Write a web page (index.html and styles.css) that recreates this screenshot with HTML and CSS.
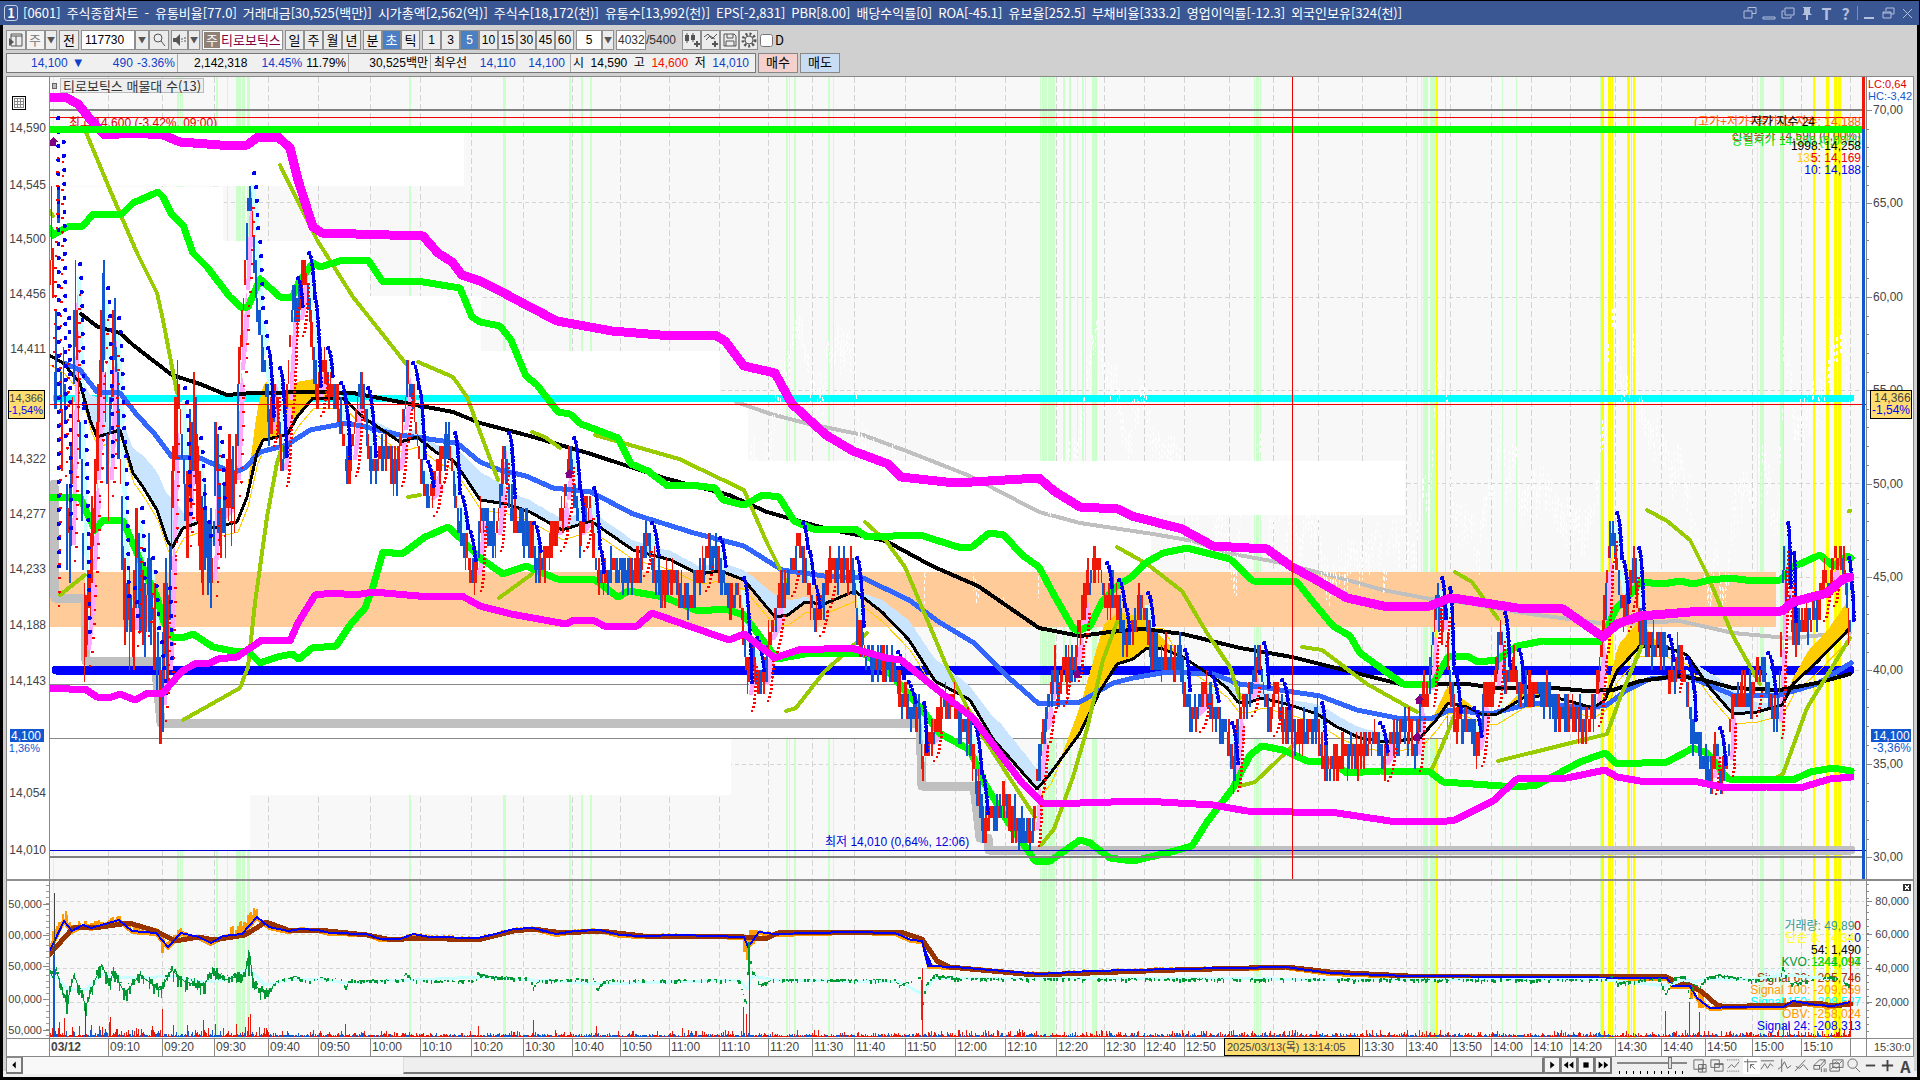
FILE: index.html
```html
<!DOCTYPE html>
<html lang="ko">
<head>
<meta charset="utf-8">
<title>[0601] 주식종합차트</title>
<link rel="stylesheet" href="styles.css">
</head>
<body>
<main class="window">
  <header class="titlebar">
    <span class="title-index">1</span>
    <h1 class="title-text"><span>[0601]</span><span>주식종합차트</span><span>-</span><span>유통비율[77.0]</span><span>거래대금[30,525(백만)]</span><span>시가총액[2,562(억)]</span><span>주식수[18,172(천)]</span><span>유통수[13,992(천)]</span><span>EPS[-2,831]</span><span>PBR[8.00]</span><span>배당수익률[0]</span><span>ROA[-45.1]</span><span>유보율[252.5]</span><span>부채비율[333.2]</span><span>영업이익률[-12.3]</span><span>외국인보유[324(천)]</span></h1>
    <div class="title-actions">
      <button aria-label="연결"><svg viewBox="0 0 14 14"><path d="M5 5V1.500h8v6H9M1 5h8v7H1z"/></svg></button>
      <button aria-label="접기"><svg viewBox="0 0 14 14"><path d="M1 11h12v2H1z"/></svg></button>
      <button aria-label="복제"><svg viewBox="0 0 14 14"><path d="M4 2h9v7H4zM3 5H1v7h9v-2"/></svg></button>
      <button aria-label="고정"><svg viewBox="0 0 14 14"><path class="solid" d="M3 1h8v1H10v5l2 2H8v5H6V9H2l2-2V2H3z"/></svg></button>
      <button class="glyph">T</button>
      <button class="glyph">?</button>
      <i class="title-divider"></i>
      <button aria-label="최소화"><svg viewBox="0 0 14 14"><path class="solid" d="M2 11h10v2H2z"/></svg></button>
      <button aria-label="이전 크기"><svg viewBox="0 0 14 14"><path d="M5 5V2h8v6h-3M2 6h8v6H2zM2 7h8"/></svg></button>
      <button aria-label="닫기"><svg viewBox="0 0 14 14"><path d="M3 3l9 9M12 3l-9 9"/></svg></button>
    </div>
  </header>

  <div class="body">
    <div class="tools">
      <div class="group">
        <button class="btn" aria-label="목록 열기"><svg class="icon" viewBox="0 0 16 16"><path d="M3 2h11v12H3zM3 4h11M8 4v10"/><path class="fill" d="M1 6l5 4-5 4z"/></svg></button>
        <select class="box w-kind" aria-label="종류"><option>주</option></select>
        <button class="btn arrow slim" aria-label="종류 선택">▼</button>
      </div>
      <button class="btn">전</button>
      <div class="group">
        <input class="box w-code" value="117730" aria-label="종목코드">
        <button class="btn arrow" aria-label="최근 종목">▼</button>
        <button class="btn" aria-label="검색"><svg class="icon" viewBox="0 0 16 16"><circle cx="7" cy="6" r="4"/><path d="M10 9l4 5"/></svg></button>
      </div>
      <div class="group">
        <button class="btn speaker" aria-label="소리"><svg class="icon" viewBox="0 0 16 16"><path class="fill" d="M1 6h3l4-4v12L4 10H1z"/><path d="M10 6v4M13 5v6" stroke-dasharray="2 1"/></svg></button>
        <button class="btn arrow slim" aria-label="소리 설정">▼</button>
      </div>
      <div class="box stock"><span class="stock-tag">주</span><span>티로보틱스</span></div>
      <div class="group periods">
        <button class="btn">일</button><button class="btn">주</button><button class="btn">월</button><button class="btn">년</button>
      </div>
      <div class="group periods">
        <button class="btn">분</button><button class="btn on">초</button><button class="btn">틱</button>
      </div>
      <div class="group periods numbers">
        <button class="btn">1</button><button class="btn">3</button><button class="btn on">5</button><button class="btn">10</button><button class="btn">15</button><button class="btn">30</button><button class="btn">45</button><button class="btn">60</button>
      </div>
      <div class="group">
        <input class="box w-unit" value="5" aria-label="주기"><button class="btn arrow slim" aria-label="주기 선택">▼</button>
      </div>
      <label class="count"><input class="box w-count" value="4032" aria-label="봉 개수">/5400</label>
      <div class="group periods">
        <button class="btn" aria-label="봉 추가"><svg class="icon" viewBox="0 0 16 16"><path class="fill" d="M1 3h4v6H1zM7 3h4v5H7zM10 11h6v2h-6zM12 9h2v6h-2z"/><path d="M3 1v10M9 1v9"/></svg></button>
        <button class="btn" aria-label="지표 추가"><svg class="icon" viewBox="0 0 16 16"><path d="M1 5l4-3 4 5 5-5M3 8l4-4 5 3"/><path class="fill" d="M9 11h6v2H9zM11 9h2v6h-2z"/></svg></button>
        <button class="btn" aria-label="저장"><svg class="icon" viewBox="0 0 16 16"><path d="M2 2h10l2 2v10H2zM5 2v4h6V2M4 14V9h8v5"/></svg></button>
        <button class="btn" aria-label="설정"><svg class="icon" viewBox="0 0 16 16"><circle class="gear" cx="8" cy="8" r="6"/><circle cx="8" cy="8" r="4"/></svg></button>
      </div>
      <label class="check"><input type="checkbox">D</label>
    </div>

    <div class="quote">
      <div class="quote-cells">
        <div class="cell c1 blue"><span>14,100</span><span class="tri">▼</span><span class="gap-l">490</span><span>-3.36%</span></div>
        <div class="cell c2"><span>2,142,318</span><span class="push blue">14.45%</span><span>11.79%</span></div>
        <div class="cell c3"><span class="push">30,525백만</span></div>
        <div class="cell c4"><span>최우선</span><span class="blue">14,110</span><span class="blue">14,100</span></div>
        <div class="cell c5"><span>시</span><span>14,590</span><span>고</span><span class="red">14,600</span><span>저</span><span class="blue">14,010</span></div>
      </div>
      <button class="trade buy">매수</button>
      <button class="trade sell">매도</button>
    </div>

    <section class="chart">
      <svg id="left-main" viewBox="7 77 42 803" preserveAspectRatio="none"></svg>
      <div class="plot">
        <svg id="main" viewBox="49 77 1817 803" preserveAspectRatio="none"></svg>
        <span class="legend"><i class="legend-dot"></i><b class="legend-name">티로보틱스 매물대 수(13)</b></span>
      </div>
      <svg id="right-main" viewBox="1866 77 48 803" preserveAspectRatio="none"></svg>
      <svg id="left-sub" viewBox="7 880 42 158" preserveAspectRatio="none"></svg>
      <svg id="sub" viewBox="49 880 1817 158" preserveAspectRatio="none"></svg>
      <svg id="right-sub" viewBox="1866 880 48 158" preserveAspectRatio="none"></svg>
      <svg id="left-time" viewBox="7 1038 42 19" preserveAspectRatio="none"></svg>
      <svg id="time" viewBox="49 1038 1817 19" preserveAspectRatio="none"></svg>
      <svg id="right-time" viewBox="1866 1038 48 19" preserveAspectRatio="none"></svg>
    </section>

    <footer class="controls">
      <button class="raised" aria-label="왼쪽"><svg viewBox="0 0 16 16"><path class="ink" d="M10 4v8L6 8z"/></svg></button>
      <div class="track"><div class="thumb"></div></div>
      <button class="raised" aria-label="재생"><svg viewBox="0 0 16 16"><path class="ink" d="M6 4v8l5-4z"/></svg></button>
      <button class="raised" aria-label="뒤로"><svg viewBox="0 0 16 16"><path class="ink" d="M7 4v8L2 8zM13 4v8L8 8z"/></svg></button>
      <button class="raised" aria-label="정지"><svg viewBox="0 0 16 16"><path class="ink" d="M5 5h6v6H5z"/></svg></button>
      <button class="raised" aria-label="앞으로"><svg viewBox="0 0 16 16"><path class="ink" d="M3 4v8l5-4zM9 4v8l5-4z"/></svg></button>
      <div class="speed"><input type="range" value="77" aria-label="재생 속도"></div>
      <div class="chart-tools">
        <button aria-label="창 추가"><svg viewBox="0 0 16 16"><path d="M2 2h10v10H2zM7 7h8v8H7zM7 11h8M11 7v8"/></svg></button>
        <button aria-label="창 겹치기"><svg viewBox="0 0 16 16"><path d="M2 2h9v8H2zM6 6h9v8H6zM6 7h9"/></svg></button>
        <button aria-label="영역"><svg viewBox="0 0 16 16"><path d="M1 2h14M1 14h14" stroke-dasharray="1 1"/><path d="M2 11l4-4 3 3 5-6"/></svg></button>
        <button class="pressed" aria-label="십자선"><svg viewBox="0 0 16 16"><path d="M1 4h14M5 1v14M8 7l5 5M8 11V7h4"/></svg></button>
        <button aria-label="수평선"><svg viewBox="0 0 16 16"><path d="M1 3h14M1 12l4-6 3 5 3-5 3 3"/></svg></button>
        <button aria-label="수직선"><svg viewBox="0 0 16 16"><path d="M5 1v14M1 12l4-3 3-5 3 7 4-3"/></svg></button>
        <button aria-label="추세선"><svg viewBox="0 0 16 16"><path d="M1 14L12 2M2 9l4 2 4-4 5 6"/></svg></button>
        <button aria-label="전체 지우기"><svg viewBox="0 0 16 16"><path d="M2 8l6-6h6l-5 6zM2 8v4h6V8M14 2v4l-5 5M10 15v-4M13 15v-4M15 15v-4"/></svg></button>
        <button aria-label="비교"><svg viewBox="0 0 16 16"><path d="M4 2h11v8H4zM1 6h10v8H1zM5 6l3-2 3 2 3-3M2 12l3-3 3 2 2-2"/></svg></button>
        <button aria-label="확대경"><svg viewBox="0 0 16 16"><circle cx="7" cy="6" r="5"/><path d="M10 10l5 5"/></svg></button>
        <button aria-label="축소"><svg viewBox="0 0 16 16"><path class="bold" d="M3 8h10"/></svg></button>
        <button aria-label="확대"><svg viewBox="0 0 16 16"><path class="bold" d="M2 8h12M8 2v12"/></svg></button>
        <button class="letter">A</button>
      </div>
    </footer>
  </div>
</main>
<script src="chart.js"></script>
</body>
</html>
```
FILE: styles.css
```css
* { box-sizing: border-box; }

body {
  margin: 0;
  background: #000;
  color: #000;
  font: 13px/16px "Noto Sans CJK KR", sans-serif;
}

button, input, select { font: inherit; color: inherit; margin: 0; padding: 0; }

.window { display: flex; flex-direction: column; height: 100vh; padding: 1px 0 3px; }

/* title bar */
.titlebar { display: flex; align-items: center; flex: none; height: 24px; padding: 0 4px; background: #3a5794; color: #fff; margin-right: 1px; }
.title-index { width: 14px; height: 16px; border: 1px solid #c8d3ea; border-radius: 3px; text-align: center; line-height: 14px; font-weight: bold; }
.title-text { display: flex; gap: 6px; flex: 1; min-width: 0; margin: 0 0 0 5px; font-size: 13px; line-height: 20px; font-weight: normal; white-space: nowrap; }
.title-actions { display: flex; align-items: center; gap: 4px; }
.title-actions button { width: 15px; height: 16px; border: 0; background: none; color: #b4c0dc; }
.title-actions svg { display: block; width: 14px; height: 14px; fill: none; stroke: #b4c0dc; }
.title-actions .solid { fill: #b4c0dc; stroke: none; }
.title-actions .glyph { font-size: 16px; font-weight: bold; }
.title-divider { width: 1px; height: 14px; background: #7f8fb5; }

.body { display: flex; flex-direction: column; flex: 1; min-height: 0; margin: 0 3px; padding: 5px 3px 3px; background: #d0d0d0; box-shadow: inset 0 -6px #efefef; }

/* toolbar */
.tools { display: flex; flex: none; gap: 2px; height: 20px; align-items: stretch; }
.tools input, .numbers, .count, .quote { font: 12px/16px "Liberation Sans", "Noto Sans CJK KR", sans-serif; }
.group { display: flex; }
.btn { width: 20px; border: 1px solid #8f8f8f; background: #ececec; display: grid; place-items: center; }
.periods .btn { width: 19px; }
.btn.on { background: #4a7fc4; color: #fff; }
.icon { width: 16px; height: 16px; fill: none; stroke: #555; }
.icon .fill { fill: #555; stroke: none; }
.icon .gear { stroke-width: 3; stroke-dasharray: 2 2; }
.box { border: 1px solid #8f8f8f; background: #fff; height: 20px; border-radius: 0; }
.btn.arrow { width: 14px; font-size: 8px; color: #555; }
.btn.slim { width: 12px; }
.btn.speaker { width: 17px; }
.w-kind { width: 19px; padding-left: 2px; background: #f4f4f4; color: #777; appearance: none; }
.w-code { width: 54px; padding-left: 3px; }
.w-unit { width: 26px; text-align: center; }
.w-count { width: 30px; padding-left: 1px; }
.stock { display: flex; width: 81px; color: #800040; white-space: nowrap; line-height: 18px; }
.stock-tag { flex: none; width: 16px; margin: 1px; background: #8f8078; color: #fff; line-height: 16px; text-align: center; }
.count { display: flex; width: 64px; color: #333; }
.tools .count { line-height: 20px; }
.check { display: flex; gap: 2px; align-items: center; }
.check input { width: 13px; height: 13px; }

/* quote line */
.quote { display: flex; flex: none; gap: 2px; height: 20px; margin: 3px 0; }
.quote-cells { display: flex; border: 1px solid #777; background: #f0f0f0; line-height: 18px; }
.cell { display: flex; white-space: nowrap; border-right: 1px solid #aaa; padding: 0 2px; }
.cell:last-child { border-right: 0; }
.c1 { width: 171px; padding-left: 24px; justify-content: space-between; }
.c1 .gap-l { margin-left: 24px; }
.tri { font-size: 13px; }
.c2 { width: 171px; padding-left: 16px; gap: 4px; }
.c3 { width: 82px; }
.c4 { width: 140px; padding: 0 5px 0 3px; justify-content: space-between; }
.c5 { width: 184px; padding-right: 6px; justify-content: space-between; }
.push { margin-left: auto; }
.blue { color: #1040c8; }
.red { color: #f01000; }
.trade { width: 40px; border: 1px solid #888; font-size: 13px; }
.buy { background: #f5d0cc; }
.sell { background: #c8dcf4; }

/* chart */
.chart { display: grid; flex: 1; min-height: 0; grid-template-columns: 42px minmax(0, 1fr) 48px; grid-template-rows: minmax(0, 803fr) minmax(0, 158fr) 19px; background: #fff; border: 1px solid #888; border-bottom: 0; border-right: 0; }
.chart svg { display: block; width: 100%; height: 100%; shape-rendering: crispEdges; }
.chart text { font: 12px "Liberation Sans", "Noto Sans CJK KR", sans-serif; fill: #444; dominant-baseline: central; }
.chart .tag { font-size: 11px; }
.chart .strong { font-weight: bold; }
.plot { position: relative; min-height: 0; }
.legend { position: absolute; left: 3px; top: 1px; display: flex; align-items: center; gap: 3px; }
.legend-dot { width: 5px; height: 6px; border: 1px solid #666; background: #bbb; }
.legend-name { padding: 0 2px; border: 1px solid #bbb; background: #eee; color: #333; font-weight: normal; line-height: 13px; }

/* bottom controls */
.controls { display: flex; flex: none; height: 17px; background: #efefef; }
.raised { width: 17px; border: 1px solid #888; border-right: 2px solid #777; border-bottom: 2px solid #777; background: #f4f4f4; }
.raised svg { display: block; width: 14px; height: 14px; }
.ink { fill: #000; }
.track { flex: 1; display: flex; justify-content: flex-end; background: #f8f8f8; }
.thumb { width: 75%; background: #efefef; border: 1px solid #ddd; border-right: 2px solid #777; border-bottom: 2px solid #777; }
.speed { width: 80px; padding: 0 5px; background: repeating-linear-gradient(90deg, #000 0 1px, transparent 1px 7px) 7px 14px / 68px 3px no-repeat; }
.speed input { display: block; appearance: none; width: 70px; height: 12px; background: linear-gradient(#888, #888) 0 5px / 100% 2px no-repeat; }
.speed input::-webkit-slider-thumb { appearance: none; width: 4px; height: 12px; background: #ddd; border: 1px solid #777; }
.chart-tools { display: flex; width: 222px; justify-content: space-between; }
.chart-tools button { width: 17px; border: 0; background: none; color: #444; }
.chart-tools svg { display: block; width: 15px; height: 15px; fill: none; stroke: #666; }
.chart-tools .pressed { background: #fff; }
.chart-tools .bold { stroke: #444; stroke-width: 2; }
.chart-tools .letter { font-weight: bold; font-size: 16px; }
```
FILE: chart.js
```js
const NS = 'http://www.w3.org/2000/svg';
const $ = id => document.getElementById(id);

function add(host, tag, attrs, text) {
  const el = document.createElementNS(NS, tag);
  for (const k in attrs) el.setAttribute(k, attrs[k]);
  if (text !== undefined) el.textContent = text;
  host.appendChild(el);
  return el;
}
const pts = s => s.trim().split(/\s+/).map(p => p.split(',').map(Number));
const line = (host, s, color, w, extra) => add(host, 'polyline', Object.assign({ points: s, fill: 'none', stroke: color, 'stroke-width': w, 'stroke-linejoin': 'round', 'stroke-linecap': 'round' }, extra));
const rect = (host, x, y, w, h, fill, extra) => add(host, 'rect', Object.assign({ x, y, width: w, height: h, fill }, extra));
const path = (host, d, color, w, extra) => add(host, 'path', Object.assign({ d, fill: 'none', stroke: color, 'stroke-width': w }, extra));
const label = (host, x, y, t, color, anchor, cls) => add(host, 'text', { x, y, class: cls || '', 'text-anchor': anchor || 'start', style: color ? 'fill:' + color : '' }, t);

let seed = 7;
const rnd = () => (seed = (seed * 16807) % 2147483647) / 2147483647;

function at(p, x) {
  for (let i = 1; i < p.length; i++) {
    if (x <= p[i][0]) {
      const [a, b] = [p[i - 1], p[i]];
      return a[1] + (b[1] - a[1]) * (x - a[0]) / ((b[0] - a[0]) || 1);
    }
  }
  return p[p.length - 1][1];
}

const main = $('main'), sub = $('sub'), time = $('time');

const times = [[108,'09:10'],[162,'09:20'],[214,'09:30'],[268,'09:40'],[318,'09:50'],[370,'10:00'],[420,'10:10'],[471,'10:20'],[523,'10:30'],[572,'10:40'],[620,'10:50'],[669,'11:00'],[719,'11:10'],[768,'11:20'],[812,'11:30'],[854,'11:40'],[905,'11:50'],[955,'12:00'],[1005,'12:10'],[1056,'12:20'],[1104,'12:30'],[1144,'12:40'],[1184,'12:50'],[1229,''],[1273,''],[1318,''],[1362,'13:30'],[1406,'13:40'],[1450,'13:50'],[1491,'14:00'],[1531,'14:10'],[1570,'14:20'],[1615,'14:30'],[1661,'14:40'],[1705,'14:50'],[1752,'15:00'],[1801,'15:10'],[1850,'']];
const greens = [[53,1],[177,2],[180,1],[182,1],[216,2],[227,1],[236,5],[242,3],[247,3],[409,2],[503,3],[569,2],[581,2],[590,2],[786,2],[789,1],[794,2],[828,2],[833,1],[1040,1],[1042,5],[1048,7],[1063,2],[1069,2],[1077,1],[1082,2],[1085,1],[1092,5],[1254,1],[1256,3],[1260,1],[1417,1],[1421,1],[1423,5],[1430,6],[1502,1],[1516,1],[1600,1],[1757,1],[1760,4],[1780,3]];
const yellows = [[1436,2],[1445,1],[1601,3],[1608,3],[1612,1],[1627,3],[1631,1],[1633,2],[1783,1],[1813,2],[1826,3],[1834,3],[1838,3]];

function backdrop(svg, y, h, rows) {
  rect(svg, 49, y, 1817, h, '#f8f8f8');
  for (const [x] of times) path(svg, `M${x + .5} ${y}v${h}`, '#d4d4d4', 1, { 'stroke-dasharray': '6 3' });
  for (const r of rows) path(svg, `M49 ${r + .5}H1864`, '#d4d4d4', 1, { 'stroke-dasharray': '4 3' });
  for (const [x, w] of greens) rect(svg, x, y, w, h, '#ccffcc');
  for (const [x, w] of yellows) rect(svg, x, y, w, h, '#ffff00');
}

/* ---------- price panel ---------- */
backdrop(main, 77, 803, [202, 297, 390, 483, 577, 670, 764]);
[[133,53,464],[187,54,223],[241,55,370],[296,55,481],[351,54,720],[405,56,748],[461,54,1405],[515,57,1151],[627,57,896],[684,55,1447],[739,56,731],[795,55,250]]
  .forEach(([y, h, x]) => rect(main, 49, y, x - 49, h, '#fff'));
rect(main, 49, 572, 1727, 55, '#ffcc99');
path(main, 'M49 684.500H1447V738.500H49', '#888', 1);

const price = pts('49,350 52,240 54,130 55,590 57,300 59,140 62,460 65,330 67,540 71,545 76,276 80,420 86,650 92,570 96,480 101,360 104,300 109,480 115,330 120,440 125,610 131,600 134,630 138,520 141,600 145,620 149,570 155,640 160,680 162,705 166,600 168,670 172,540 175,420 181,400 187,530 191,440 197,450 201,520 208,560 213,580 216,440 221,520 230,490 236,480 240,370 245,290 250,185 254,240 259,320 264,360 270,430 276,380 283,470 288,400 294,290 299,320 305,265 311,310 317,400 324,360 329,390 337,395 344,430 346,470 352,460 359,390 364,400 372,470 382,450 390,460 398,470 403,430 409,375 415,400 421,470 430,500 438,470 444,445 451,445 456,505 464,540 472,575 477,575 482,510 490,525 497,535 502,480 505,445 511,510 520,525 530,535 537,565 545,555 557,535 566,500 570,450 576,500 580,535 590,500 596,560 600,585 612,570 620,570 633,578 640,560 648,535 655,570 664,588 675,575 683,598 692,598 702,575 709,550 716,550 722,580 730,600 740,590 746,650 748,695 753,650 760,682 764,685 770,640 780,600 788,580 795,555 799,535 804,560 810,595 816,620 824,595 831,570 836,568 853,570 860,640 868,658 876,664 894,664 900,690 912,715 920,715 923,765 930,745 938,715 945,710 955,702 962,720 970,735 978,785 984,825 992,818 998,818 1005,795 1012,818 1020,830 1035,830 1038,780 1044,730 1050,700 1055,668 1060,690 1066,665 1075,665 1080,630 1086,595 1092,575 1097,560 1103,575 1108,600 1115,592 1121,618 1126,645 1132,635 1138,612 1144,605 1150,640 1158,655 1165,662 1181,662 1186,702 1196,716 1206,685 1215,715 1228,735 1234,775 1240,710 1248,700 1256,670 1260,655 1265,700 1270,720 1278,692 1285,720 1295,730 1310,730 1318,715 1322,755 1330,768 1345,752 1365,755 1376,735 1384,765 1392,733 1412,733 1416,755 1421,700 1430,690 1434,630 1438,590 1442,630 1446,600 1450,680 1457,725 1470,720 1478,750 1485,695 1495,690 1501,625 1506,680 1515,662 1520,695 1533,690 1545,690 1555,708 1568,718 1575,710 1584,728 1595,710 1603,640 1609,550 1613,525 1618,570 1625,615 1630,590 1635,560 1640,625 1652,645 1665,648 1670,675 1676,676 1678,650 1683,670 1690,700 1692,735 1700,745 1706,765 1712,778 1716,740 1722,778 1729,760 1732,705 1745,692 1753,700 1758,675 1764,665 1772,705 1778,722 1782,640 1784,535 1787,600 1790,565 1792,635 1800,630 1806,620 1812,615 1820,605 1826,578 1830,590 1836,560 1841,555 1845,570 1848,600 1850,635');

path(main, 'M49 110H1862', '#808080', 2);
path(main, 'M49 117.500H1862', '#f00000', 1);
label(main, 69, 123, '최고 14,600 (-3,42%, 09:00)', '#e00000');
label(main, 1861, 122, '(고가+저가+종가)/3 지수: 14,188', '#ff6600', 'end');
label(main, 1815, 122, '저가 지수 24', '#000', 'end');

/* stepped low line, long average, horizontal references */
line(main, '54,484 55,598 85,598 86,661 155,661 161,723 920,723 922,786 974,786 980,838 988,838 989,850 1851,850', '#c0c0c0', 9);
line(main, '736,402 771,414 805,423 863,435 909,452 970,476 1039,512 1080,523 1153,534 1193,541 1233,554 1277,562 1333,576 1383,590 1430,599 1467,603 1523,613 1607,624 1680,621 1733,633 1787,638 1850,633', '#c0c0c0', 4);
line(main, '56,398 1851,398', '#00ffff', 7);
line(main, '56,670 1850,670', '#0000ff', 9);

/* reversed companion series, barely visible on the pale ground */
let ghost = '';
for (let x = 750; x < 1850; x += 1.5) {
  const y = 1.15 * at(price, x) - 313 + rnd() * 30 - 15;
  if (y < 600) ghost += `M${x} ${y.toFixed(0)}v${(8 + rnd() * 24).toFixed(0)}`;
}
path(main, ghost, '#fff', 1, { 'stroke-dasharray': '4 3' });

/* bands round the middle average */
const avg = pts('49,355 63,363 80,383 90,420 97,437 120,430 133,473 143,487 157,510 167,540 172,548 183,528 200,522 213,528 237,522 247,497 257,453 263,440 287,435 297,417 313,398 343,398 363,417 400,442 417,437 437,453 453,460 467,480 480,500 507,504 530,512 562,530 591,521 633,550 671,560 698,574 721,571 744,580 775,617 788,615 805,602 824,604 855,591 882,612 909,640 935,681 970,700 993,739 1037,789 1050,774 1080,733 1100,691 1117,664 1133,659 1147,648 1163,649 1183,657 1213,677 1227,688 1238,702 1250,702 1262,698 1290,705 1317,714 1337,727 1360,738 1387,742 1420,738 1437,719 1448,703 1467,707 1483,715 1497,714 1523,698 1547,695 1593,708 1605,700 1617,671 1640,646 1663,646 1687,655 1710,688 1733,714 1757,712 1782,705 1793,684 1817,662 1850,628');
function band(s, color) {
  const b = pts(s), top = [], bottom = [];
  for (let x = b[0][0]; x <= b[b.length - 1][0]; x += 3) {
    const y = at(avg, x);
    top.push(`${x},${(y - at(b, x)).toFixed(0)}`);
    bottom.unshift(`${x},${y.toFixed(0)}`);
  }
  add(main, 'polygon', { points: top.concat(bottom).join(' '), fill: color });
}
['75,0 90,25 97,40 120,15 140,30 157,38 172,50 185,10 200,0', '350,0 400,8 440,8 460,18 480,28 520,12 600,10 720,8 744,10 775,22 805,5 850,0', '855,0 882,12 910,20 935,22 970,14 1000,24 1037,20 1055,0', '1200,0 1235,10 1290,5 1330,12 1390,8 1420,0', '1690,0 1715,18 1733,24 1760,8 1785,0'].forEach(s => band(s, '#c8e4ff'));
['246,0 254,35 265,58 280,50 300,32 318,14 345,0', '1060,0 1090,40 1105,60 1117,52 1140,40 1160,12 1180,0', '1425,0 1447,18 1460,8 1480,0', '1500,0 1525,10 1550,0', '1602,0 1620,25 1640,27 1660,0', '1785,0 1810,20 1830,22 1850,30'].forEach(s => band(s, '#ffcc00'));
line(main, avg.map(([x, y]) => `${x + 1},${y + (x > 1060 && x < 1180 ? -20 : 10)}`).join(' '), '#ffcc00', 1);

/* shaded swings */
for (let i = 1; i < price.length; i++) {
  const [a, b] = [price[i - 1], price[i]], d = b[1] - a[1];
  if (Math.abs(d) < 30 || a[0] < 70) continue;
  add(main, 'polygon', { points: `${a[0] + 1},${a[1]} ${b[0] + 1},${b[1]} ${b[0] + 5},${b[1] + (d < 0 ? 20 : -20)} ${a[0] + 5},${a[1]}`, fill: d < 0 ? '#ffaaff' : '#ccffff' });
}

line(main, '64,363 80,370 97,392 120,393 137,415 153,432 172,457 200,458 233,473 245,468 260,452 287,445 310,430 347,423 370,428 400,435 457,443 480,462 500,470 526,476 553,488 591,492 633,514 694,533 744,546 782,570 824,576 863,578 909,600 939,622 974,643 1008,677 1039,704 1080,702 1087,698 1113,683 1133,678 1167,672 1213,674 1240,684 1320,696 1357,710 1397,718 1433,718 1450,710 1490,714 1533,703 1587,708 1607,705 1627,690 1650,679 1687,676 1733,695 1780,695 1817,684 1851,663', '#3366ff', 5);
line(main, '81,314 98,327 120,333 133,345 155,362 172,375 200,384 227,395 253,393 313,392 353,393 400,402 453,412 480,423 530,436 591,454 664,478 729,495 767,512 824,528 886,541 932,566 978,586 1039,628 1080,636 1110,632 1143,629 1183,634 1240,648 1292,657 1360,674 1400,684 1467,684 1497,688 1543,687 1587,691 1613,690 1640,681 1677,676 1700,679 1733,688 1780,690 1817,683 1850,674', '#000', 4);
line(main, avg.map(p => p.join(',')).join(' '), '#000', 3);

['49,210 53,216', '85,130 110,190 137,253 157,293 163,320 177,393', '280,165 317,240 353,297 407,365', '418,362 453,377 467,397 483,440 498,480', '60,595 85,575', '183,720 240,688 248,667 255,603 267,517 277,463 282,447', '532,432 545,437 560,448', '595,435 679,459 744,490 767,543 786,581', '865,522 886,541 905,567 947,667 978,729 1035,817', '499,598 532,574', '786,711 796,708 824,672 867,633', '1041,845 1054,829 1073,777 1087,729 1103,660 1117,622', '1117,547 1147,564 1182,591 1207,633 1230,667 1240,698', '1240,786 1255,782 1300,739', '1302,647 1322,650 1367,684 1417,712', '1455,572 1472,582 1498,619', '1432,769 1442,746 1455,714', '1498,761 1607,734 1620,698 1643,643', '1647,510 1667,521 1690,540 1707,574 1733,636 1760,684', '1773,779 1783,774 1807,708 1850,638', '1849,511 1850,511', '408,497 420,495']
  .forEach(s => line(main, s, '#99cc00', 4));

line(main, '49,228 53,235 67,227 83,226 93,214 122,214 133,203 158,192 163,197 172,215 183,225 193,253 207,267 230,297 242,308 248,307 260,279 280,297 292,298 300,280 313,263 320,267 343,260 368,260 383,282 417,281 460,288 472,317 480,322 500,326 511,340 526,376 537,385 558,412 570,414 581,424 618,438 631,464 648,471 668,486 690,485 715,488 723,500 744,505 763,495 779,497 794,521 813,529 855,529 867,537 920,535 958,547 972,547 989,533 1004,535 1022,555 1039,567 1054,595 1073,628 1078,631 1090,626 1103,600 1117,586 1130,578 1147,562 1163,553 1187,548 1230,559 1253,581 1297,582 1313,602 1333,626 1350,636 1360,653 1403,684 1433,684 1448,657 1467,656 1478,662 1497,660 1517,646 1543,641 1600,642 1617,607 1630,595 1640,582 1663,584 1680,581 1693,584 1710,580 1730,578 1753,581 1780,580 1793,567 1820,555 1833,566 1847,556 1851,558', '#00ff00', 7);
line(main, '49,497 80,497 88,515 95,530 103,520 123,521 137,553 147,577 157,597 163,620 172,637 185,637 193,634 213,647 237,652 248,651 260,663 277,657 292,654 299,659 312,648 336,646 350,625 365,608 373,587 383,552 402,554 425,537 448,527 460,538 480,558 503,574 526,566 557,579 595,580 618,597 629,591 664,597 698,611 725,609 744,615 767,646 777,659 805,654 863,653 889,672 924,712 939,733 970,750 985,784 1008,822 1035,861 1050,861 1080,840 1090,843 1110,858 1133,861 1167,853 1192,846 1207,822 1233,788 1250,755 1262,746 1283,750 1307,761 1330,761 1347,773 1380,771 1430,772 1443,782 1517,787 1537,785 1580,762 1605,753 1617,764 1667,762 1693,748 1707,753 1728,779 1793,780 1810,772 1833,768 1851,771', '#00ff00', 7);

/* bars: heights snap to the price tick */
const tick = 12.4;
let up = '', down = '';
for (let x = 50; x < 1851; x += 1.5) {
  const early = x < 240;
  const y0 = at(price, x), y1 = at(price, x + 1.5);
  const mid = (y0 + y1) / 2 + (rnd() - .5) * (early ? 40 : 12);
  const h = tick * (early ? 2 + Math.floor(rnd() * 7) : 1 + Math.floor(rnd() * 3));
  const top = Math.round((mid - h / 2) / tick) * tick;
  const bottom = Math.min(850, top + h);
  const d = `M${x.toFixed(1)} ${Math.max(126, top).toFixed(0)}V${bottom.toFixed(0)}`;
  const rising = rnd() < (y1 < y0 ? .72 : .38);
  if (rising) up += d; else down += d;
}
path(main, down, '#1158d0', 2);
path(main, up, '#f01808', 1.5);

/* trailing dots above falls and below rises */
let above = '', below = '';
for (let i = 1; i < price.length; i++) {
  const [a, b] = [price[i - 1], price[i]], d = b[1] - a[1];
  const early = a[0] < 260;
  const n = Math.max(2, Math.abs(d) / (early ? 14 : 4));
  if (Math.abs(d) < 25) continue;
  for (let k = 0; k <= n; k++) {
    const t = k / n, x = (a[0] + (b[0] - a[0]) * Math.sqrt(t) + 4).toFixed(1);
    const y = a[1] + d * t + (d > 0 ? -12 : 16);
    if (d > 0) above += `M${x} ${y.toFixed(0)}h.1`; else below += `M${x} ${y.toFixed(0)}h.1`;
  }
}
path(main, above, '#0000f0', 4, { 'stroke-linecap': 'round' });
path(main, below, '#ff0000', 3, { 'stroke-linecap': 'round' });

line(main, '49,97 65,97 78,104 90,119 105,135 133,133 163,135 180,142 220,145 247,145 258,137 278,137 290,148 298,180 313,227 322,233 423,236 438,253 452,262 462,275 480,281 500,291 530,307 557,321 612,331 660,335 715,335 725,341 744,366 775,373 792,404 826,435 853,451 888,464 901,477 955,483 1039,478 1054,491 1080,507 1118,509 1132,516 1182,529 1213,546 1267,549 1292,567 1313,578 1347,598 1383,606 1430,606 1447,599 1453,598 1517,608 1563,609 1603,637 1617,624 1640,616 1690,612 1782,611 1793,602 1827,593 1843,579 1850,577', '#ff00ff', 9);
line(main, '49,688 67,688 72,690 85,689 97,697 112,697 120,694 135,700 148,693 163,693 182,671 197,663 210,663 218,659 237,657 262,640 290,641 298,623 315,595 333,593 355,595 373,592 430,597 462,596 480,606 511,614 566,624 574,620 595,621 604,626 637,626 652,613 683,624 729,640 744,634 775,658 798,650 851,648 886,658 901,660 939,691 974,719 997,750 1023,784 1043,803 1080,803 1143,801 1213,805 1247,811 1337,813 1390,821 1447,821 1455,820 1493,801 1517,779 1567,778 1605,770 1617,777 1640,781 1693,781 1727,788 1767,787 1800,788 1830,779 1851,777', '#ff00ff', 7);
path(main, 'M49 850.500H1866', '#0000d0', 1);
path(main, 'M49 857H1862', '#808080', 2);
label(main, 825, 842, '최저 14,010 (0,64%, 12:06)', '#0000e0');
[[53, 142], [569, 474], [1077, 674], [1419, 700], [1417, 737]].forEach(([x, y]) => add(main, 'path', { d: `M${x} ${y - 5}l5 5h-2v4h-6v-4h-2z`, fill: '#800080' }));

label(main, 1861, 136, '전일종가 14,590 (0,00%)', '#993300', 'end');
label(main, 1861, 141, '당일시가 14,590 (0,00%)', '#00e800', 'end');
label(main, 1861, 146, '1998: 14,258', '#000', 'end');
label(main, 1820, 158, '135:', '#ffcc00', 'end');
label(main, 1861, 158, '5: 14,169', '#f00000', 'end');
label(main, 1861, 170, '10: 14,188', '#0000f0', 'end');
path(main, 'M49 129.500H1862', '#00ff00', 7);
path(main, 'M49 404.500H1866M1292.500 77V880', '#f00000', 1);
rect(main, 1862, 77, 3, 52, '#f01808');
rect(main, 1862, 129, 3, 750, '#1158d0');
path(main, 'M49.500 77V880', '#888', 1);
path(main, 'M49 879.500H1866', '#909090', 1);

/* ---------- price axes ---------- */
const lm = $('left-main'), rm = $('right-main');
[[128,'14,590'],[185,'14,545'],[239,'14,500'],[294,'14,456'],[349,'14,411'],[459,'14,322'],[514,'14,277'],[569,'14,233'],[625,'14,188'],[681,'14,143'],[793,'14,054'],[850,'14,010']]
  .forEach(([y, t]) => label(lm, 46, y, t, '', 'end'));
rect(lm, 8.5, 390.5, 36, 28, '#ffdd70', { stroke: '#000' });
label(lm, 43, 398, '14,366', '', 'end', 'tag');
label(lm, 43, 410, '-1,54%', '#0000f0', 'end', 'tag');
rect(lm, 10, 729, 34, 13, '#1158d0');
label(lm, 41, 736, '4,100', '#fff', 'end');
label(lm, 40, 748, '1,36%', '#1158d0', 'end', 'tag');
path(lm, 'M7 879.500H49', '#909090', 1);
rect(lm, 12.5, 96.5, 13, 13, '#fff', { stroke: '#000' });
path(lm, 'M14.500 98.500h9v9h-9zM14.500 101.500h9M14.500 104.500h9M17.500 98v9M20.500 98v9', '#888', 1);

path(rm, 'M1866.500 77V880M1913.500 77V880M1866 879.500H1914', '#888', 1);
for (let i = 0; i <= 8; i++) {
  const y = Math.round(110 + i * 93.4);
  path(rm, `M1867 ${y + .5}h5`, '#888', 1);
  if (i < 8) for (let k = 1; k < 5; k++) path(rm, `M1867 ${Math.round(y + k * 18.7) + .5}h2`, '#888', 1);
  label(rm, 1903, y, (70 - i * 5) + ',00', '', 'end');
}
label(rm, 1868, 84, 'LC:0,64', '#e00000', 'start', 'tag');
label(rm, 1868, 96, 'HC:-3,42', '#1158d0', 'start', 'tag');
rect(rm, 1870.5, 390.5, 41, 28, '#ffdd70', { stroke: '#000' });
label(rm, 1874, 398, '14,366');
label(rm, 1872, 410, '-1,54%', '#0000f0');
rect(rm, 1871, 729, 40, 13, '#1158d0');
label(rm, 1873, 736, '14,100', '#fff');
label(rm, 1873, 748, '-3,36%', '#1158d0');

/* ---------- volume panel ---------- */
backdrop(sub, 880, 158, [901, 934, 968, 1002]);
path(sub, 'M49 880.500H1866', '#909090', 1);
[[926,'거래량: 49,890','#339999'],[938,'단순 8: 14,340','#ffff00'],[950,'54: 1,490','#000'],[962,'KVO: -244,094','#009933'],[974,'KVO Signal: 2,308','#ccffff'],[978,'Signal 60: -205,746','#993300'],[990,'Signal 100: -209,659','#ff9900'],[1002,'Signal 150: -208,587','#00ffff'],[1014,'OBV: -258,024','#ff9900'],[1026,'Signal 24: -208,313','#0000f0']]
  .forEach(([y, t, c]) => label(sub, 1861, y, t, c, 'end'));
label(sub, 1861, 962, '1341,097', '#00e800', 'end');
label(sub, 1861, 938, ': 0', '#0000f0', 'end');
label(sub, 1861, 926, '0', '#f00000', 'end');

const obv = pts('49,952 55,940 64,921 72,931 83,925 91,928 119,920 132,931 156,933 168,947 181,933 199,937 211,943 223,936 242,934 257,917 269,927 288,931 300,929 318,930 330,933 367,934 380,939 400,939 413,934 430,937 478,938 495,934 514,929 533,928 556,934 575,931 600,930 620,935 643,936 680,935 744,937 748,947 759,932 775,934 850,932 895,933 911,940 922,941 928,966 955,967 1040,974 1090,971 1175,969 1286,967 1330,973 1408,976 1530,977 1667,978 1672,986 1690,986 1697,998 1710,1008 1733,1007 1783,1007 1793,1001 1817,1005 1833,1006 1850,1002');
let orange = '';
for (let x = 50; x < 1850; x += 1) {
  const reach = x < 75 ? 14 : x < 185 ? 7 : x > 230 && x < 258 ? 14 : 3;
  orange += `M${x} ${(at(obv, x) + 3).toFixed(0)}v${(-2 - rnd() * reach).toFixed(0)}`;
}
path(sub, orange, '#ff9900', 1.5);
path(sub, 'M162 935v18M744 938v14M747 938v22M750 930v14M753 930v14M756 930v10M1671 980v9M1691 985v14M1699 990v18M1702 995v13M1784 998v10', '#ff9900', 3);
line(sub, '49,955 73,928 101,927 129,923 156,931 175,941 199,937 214,940 245,935 266,922 288,930 318,930 367,935 392,940 416,938 478,940 514,931 533,929 563,933 600,931 643,936 744,937 765,939 778,933 900,932 922,939 937,961 949,967 1035,975 1090,973 1175,970 1286,967 1330,972 1408,976 1530,976 1667,977 1677,983 1690,985 1702,992 1717,1005 1727,1007 1767,1005 1787,1005 1817,1003 1833,1006 1851,1004', '#993300', 5);
line(sub, obv.map(p => p.join(',')).join(' '), '#0000ff', 2);
add(sub, 'polygon', { points: '922,941 933,966 928,967', fill: '#0000ff' });

const kvo = pts('49,970 53,978 57,972 62,990 67,1003 74,975 86,1006 95,980 102,965 110,985 113,972 125,993 140,975 160,990 172,970 185,982 203,986 214,970 225,980 245,975 249,952 254,985 265,993 280,980 295,977 310,982 320,978 343,980 345,988 350,981 403,980 405,974 415,981 476,981 478,973 490,977 531,979 533,988 540,981 594,979 597,990 605,981 740,980 744,998 747,1002 749,945 752,970 760,985 775,980 895,980 900,986 921,977 922,1014 926,985 935,975 960,979 1606,980 1613,976 1618,983 1660,979 1666,994 1675,978 1686,977 1690,999 1694,984 1699,988 1706,978 1718,975 1750,980 1780,979 1783,968 1790,984 1833,977 1850,985');
line(sub, kvo.filter((p, i) => i % 2 === 0).map(([x, y]) => `${x},${(980 + (y - 980) * .4).toFixed(0)}`).join(' '), '#ccffff', 3);
let osc = '';
for (let x = 49; x < 1850; x += 1.5) {
  const k = at(kvo, x), n = x < 270 ? 12 : 3;
  if (Math.abs(k - 980) < 2 && rnd() < .45) continue;
  osc += `M${x} ${(k - rnd() * n / 2).toFixed(0)}v${(1 + rnd() * n).toFixed(0)}`;
}
path(sub, osc, '#009933', 1.5);
line(sub, kvo.filter(p => p[0] < 270).map(p => p.join(',')).join(' '), '#009933', 1);
path(sub, 'M249 952V976M67 990V1014M749 942V972M922 980V1020', '#009933', 2);

let vr = '', vb = '';
for (let x = 50; x < 1850; x += 1) {
  const cap = x < 130 ? 18 : x < 270 ? 12 : 6;
  const h = 1 + Math.pow(rnd(), 3) * cap;
  if (rnd() < .6) vr += `M${x + .5} 1037v${-h.toFixed(0)}`; else vb += `M${x + .5} 1037v${-(h * .5 + 1).toFixed(0)}`;
}
path(sub, vr, '#e81808', 1);
path(sub, vb, '#1158d0', 1);
path(sub, 'M110.500 1037v-20M162.500 1037v-28M203.500 1037v-17M248.500 1037v-20M250.500 1037v-23M345.500 1037v-13M478.500 1037v-11M533.500 1037v-17M596.500 1037v-11M682.500 1037v-9M743.500 1037v-30M746.500 1037v-23M749 1037v-65M922 1037v-69M1019.500 1037v-8M1182.500 1037v-7M1292.500 1037v-7M1665.500 1037v-26M1689.500 1037v-35M1699.500 1037v-25M1783.500 1037v-14M1789.500 1037v-14M1850.500 1037v-84', '#e81808', 1);
path(sub, 'M54 1037v-82', '#1158d0', 2);
path(sub, 'M54.500 893v62M85.500 1037v-30', '#444', 1);
path(sub, 'M49.500 880V1038', '#888', 1);

const ls = $('left-sub'), rs = $('right-sub');
path(ls, 'M7 880.500H49', '#909090', 1);
[[904,'50,000'],[935,'00,000'],[966,'50,000'],[999,'00,000'],[1030,'50,000']].forEach(([y, t]) => {
  label(ls, 42, y, t, '', 'end', 'tag');
  path(ls, `M43 ${y + .5}h6`, '#888', 1);
});
for (let y = 885; y < 1037; y += 6) path(ls, `M46 ${y + .5}h3`, '#999', 1);
path(rs, 'M1866.500 880V1038M1913.500 880V1038M1866 880.500H1914', '#888', 1);
[[901,'80,000'],[934,'60,000'],[968,'40,000'],[1002,'20,000']].forEach(([y, t]) => {
  label(rs, 1909, y, t, '', 'end', 'tag');
  path(rs, `M1867 ${y + .5}h5`, '#888', 1);
});
for (let y = 884; y < 1037; y += 7) path(rs, `M1867 ${y + .5}h2`, '#888', 1);
rect(rs, 1903, 884, 8, 7, '#333');
path(rs, 'M1905 885.500l4 4M1909 885.500l-4 4', '#fff', 1);

/* ---------- time axis ---------- */
path(time, 'M49 1038.500H1866M49 1056.500H1866M49.500 1038v18', '#888', 1);
path($('left-time'), 'M7 1038.500H49M7 1056.500H49', '#888', 1);
label(time, 51, 1047, '03/12', '', 'start', 'strong');
times.forEach(([x, t]) => {
  path(time, `M${x + .5} 1039v17`, '#888', 1);
  if (t) label(time, x + 2, 1047, t);
});
rect(time, 1224.5, 1038.5, 135, 17, '#ffdd70', { stroke: '#000' });
label(time, 1227, 1047, '2025/03/13(목) 13:14:05', '', 'start', 'tag');
const rt = $('right-time');
path(rt, 'M1866 1038.500H1914M1866 1056.500H1914M1866.500 1038v18M1913.500 1038v18', '#888', 1);
label(rt, 1874, 1047, '15:30:0', '', 'start', 'tag');
```
